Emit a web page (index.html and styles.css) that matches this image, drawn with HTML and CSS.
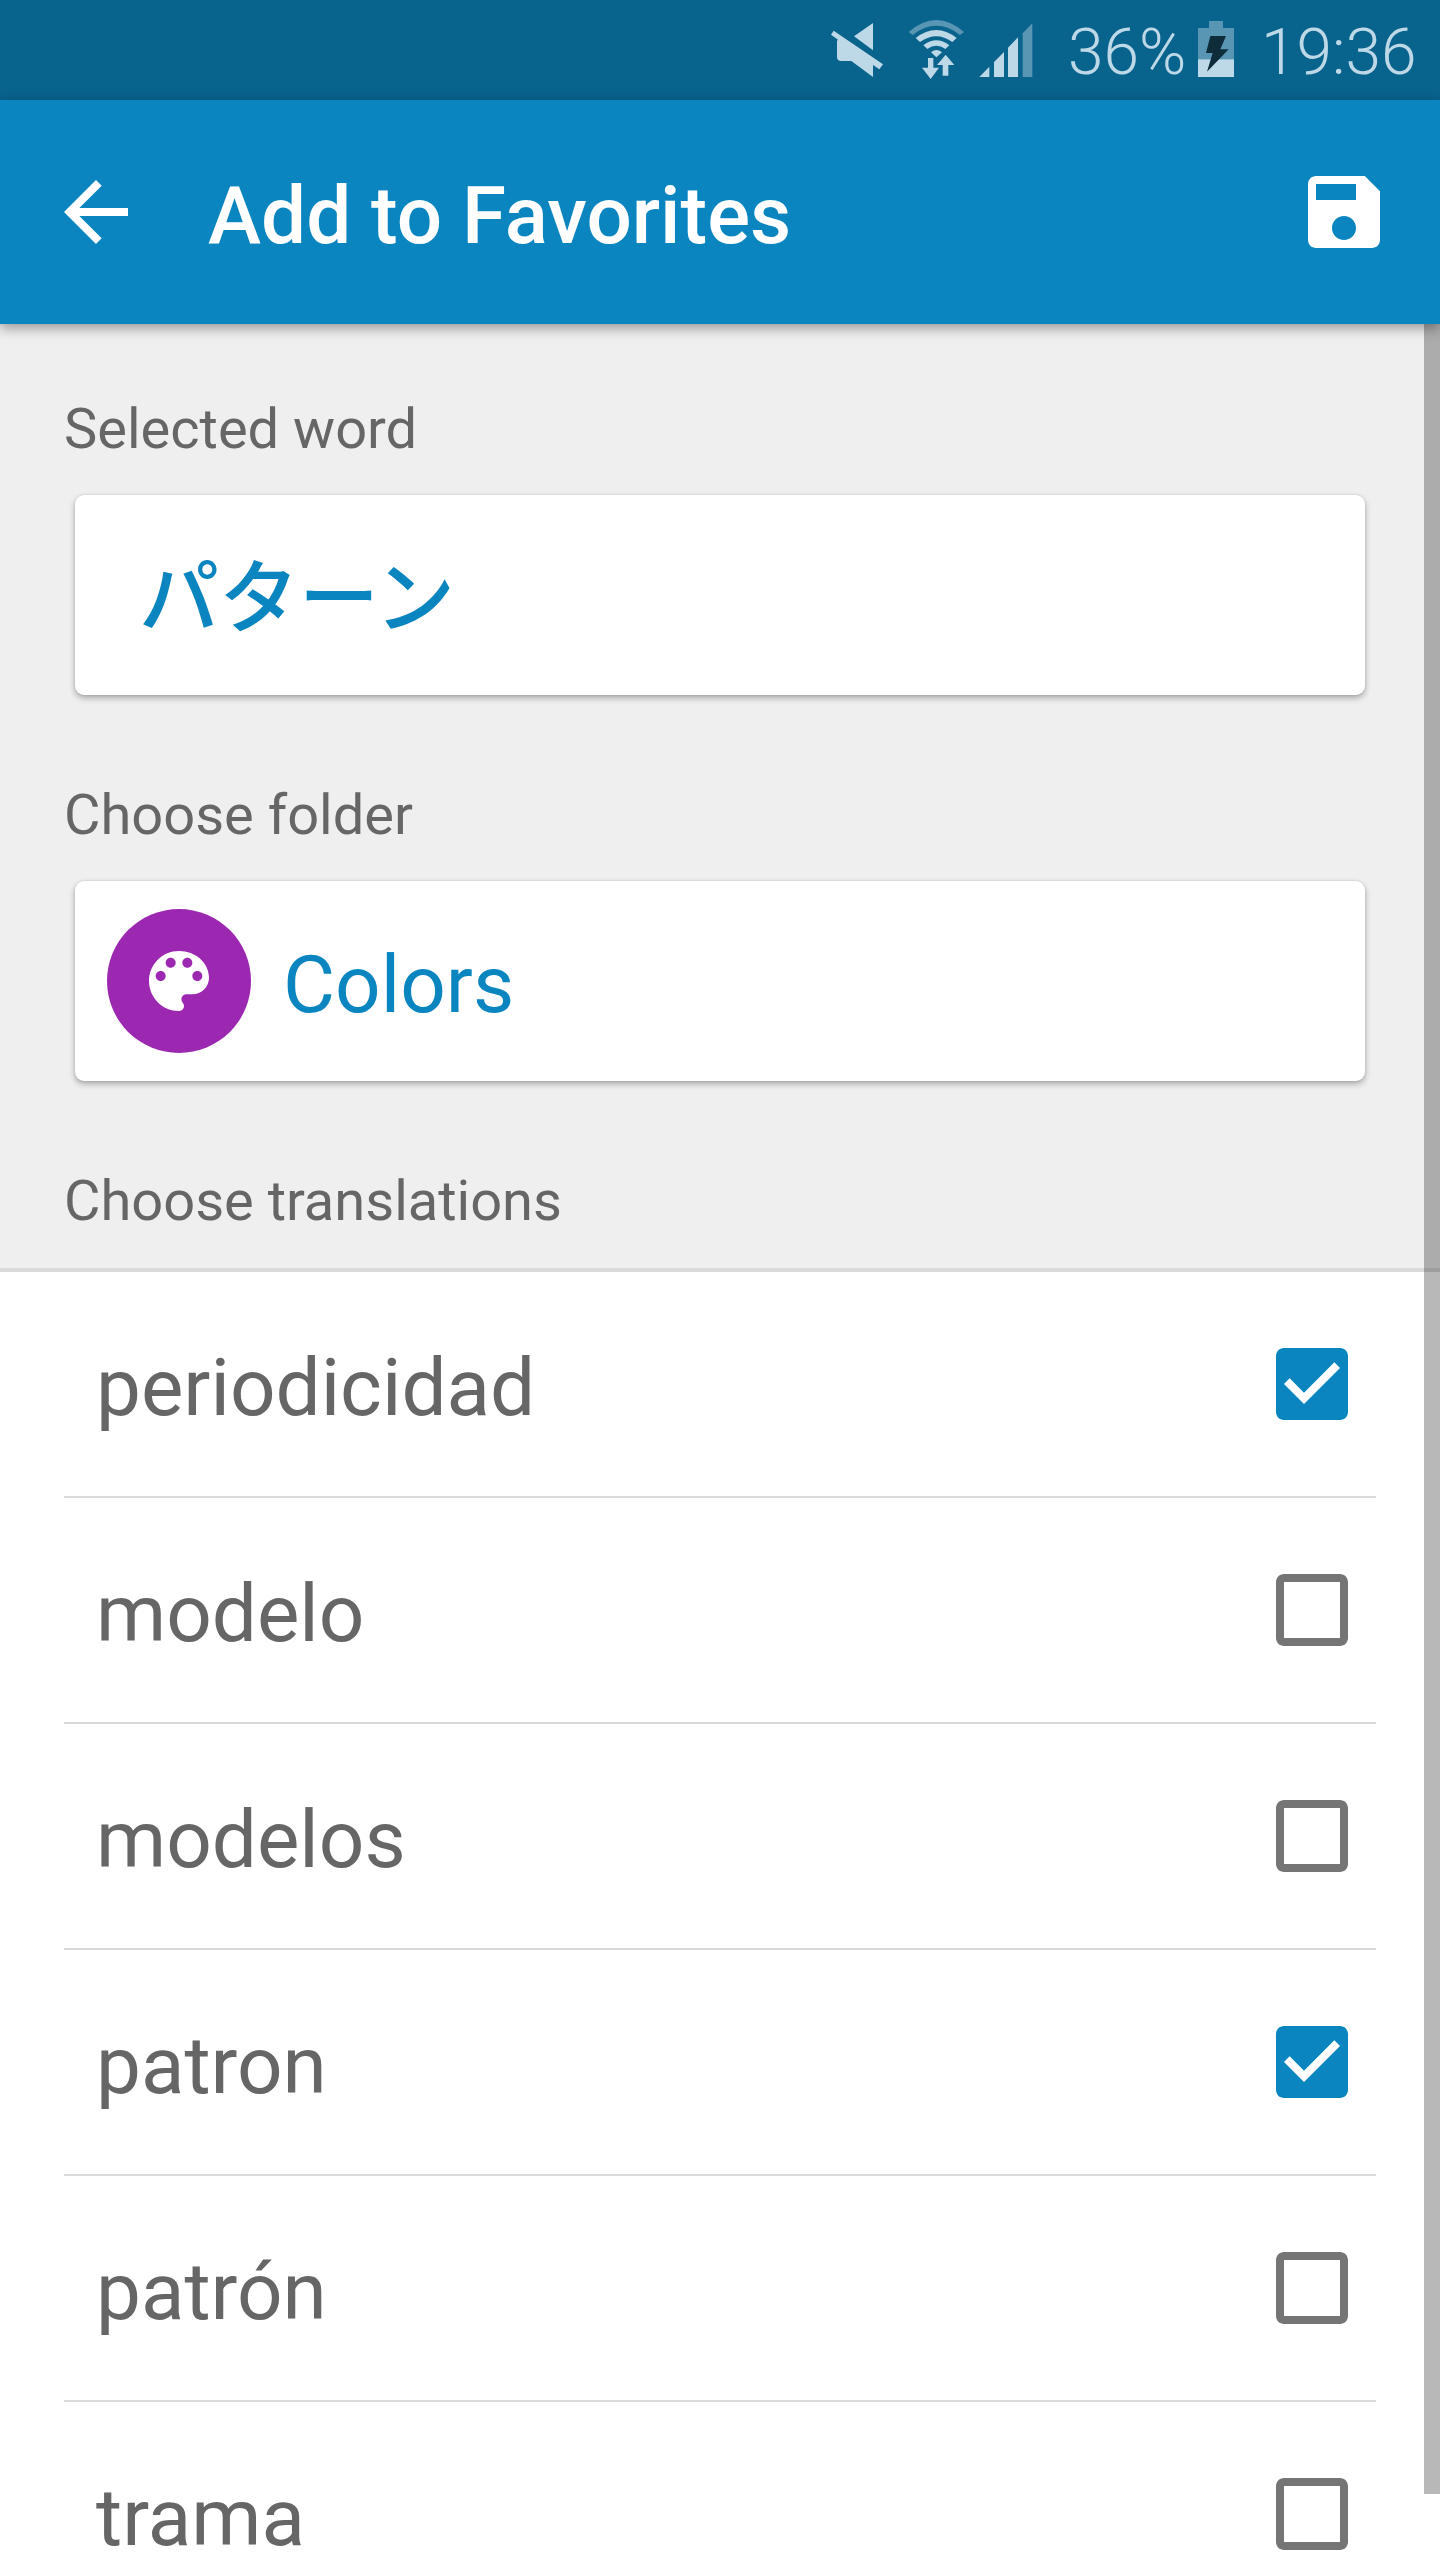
FILE: index.html
```html
<!DOCTYPE html>
<html lang="en">
<head>
  <meta charset="UTF-8" />
  <meta name="viewport" content="width=device-width, initial-scale=1.0"/>
  <title>Add to Favorites</title>
  <link rel="stylesheet" href="styles.css">
</head>
<body>
  <!-- shared checkbox icons -->
  <svg class="sprite" aria-hidden="true">
    <symbol id="box-on" viewBox="0 0 24 24">
      <path d="M19 3H5c-1.11 0-2 .9-2 2v14c0 1.1.89 2 2 2h14c1.11 0 2-.9 2-2V5c0-1.1-.89-2-2-2zm-9 14l-5-5 1.41-1.41L10 14.17l7.59-7.59L19 8l-9 9z"/>
    </symbol>
    <symbol id="box-off" viewBox="0 0 24 24">
      <path d="M19 5v14H5V5h14m0-2H5c-1.1 0-2 .9-2 2v14c0 1.1.9 2 2 2h14c1.1 0 2-.9 2-2V5c0-1.1-.9-2-2-2z"/>
    </symbol>
  </svg>

  <div class="app">
    <!-- STATUS BAR -->
    <div class="status-bar">
      <svg class="mute" viewBox="60 60 162 180" aria-label="Muted">
        <path d="M189 69V151L132 109Z"/>
        <path d="M71 92L219 193L208 208L189 195V231L124 183H94Q81 183 81 170V122L84 119L63 104Z"/>
      </svg>
      <svg class="wifi" viewBox="294 60 171 180" aria-label="Wi-Fi">
        <path class="dim" d="M296 96Q379 24 462 96L450 105Q379 50 308 105Z"/>
        <path d="M317 114Q379 66 440 114L427 126Q379 92 330 126Z"/>
        <path d="M340 136Q379 106 418 136L406 147Q379 127 352 147Z"/>
        <path d="M363 157Q379 143 396 157L379 172Z"/>
        <path d="M354 174H370V203H387L362 237L336 203H354Z"/>
        <path stroke="#08638d" stroke-width="4" paint-order="stroke" d="M407 164L433 195H415V227H398V195H381Z"/>
      </svg>
      <svg class="signal" viewBox="507 60 162 180" aria-label="Signal">
        <path d="M508 231L538 200V231ZM552 231V186L582 156V231ZM594 231V143L624 112V231Z"/>
        <path class="dim" d="M638 231V100L667 70V231Z"/>
      </svg>
      <span class="percent">36%</span>
      <svg class="battery" viewBox="234 60 108 180" aria-label="Charging">
        <path class="dim" d="M267 63H309V84H342V178H234V84H267Z"/>
        <path d="M234 178H342V231H234Z"/>
        <path class="bolt" d="M271 108H318L301 148H326L261 215L278 159H258Z"/>
      </svg>
      <span class="clock">19:36</span>
    </div>

    <!-- APP BAR -->
    <header class="app-bar">
      <svg class="icon" viewBox="0 0 24 24" aria-label="Back">
        <path d="M20 11H7.83l5.59-5.59L12 4l-8 8 8 8 1.41-1.41L7.83 13H20v-2z"/>
      </svg>
      <h1>Add to Favorites</h1>
      <svg class="icon" viewBox="0 0 24 24" aria-label="Save">
        <path fill-rule="evenodd" d="M17.2 3H5C3.9 3 3 3.9 3 5v14c0 1.1.9 2 2 2h14c1.1 0 2-.9 2-2V6.8zM12 19c-1.66 0-3-1.34-3-3s1.34-3 3-3 3 1.34 3 3-1.34 3-3 3zM15 9H5V5h10v4z"/>
      </svg>
    </header>

    <main class="content">
      <section class="form">
        <h2>Selected word</h2>
        <div class="card word" lang="ja">パターン</div>

        <h2>Choose folder</h2>
        <div class="card folder">
          <span class="badge">
            <svg viewBox="0 0 24 24">
              <path d="M12 3c-4.97 0-9 4.03-9 9s4.03 9 9 9c.83 0 1.5-.67 1.5-1.5 0-.39-.15-.74-.39-1.01-.23-.26-.38-.61-.38-.99 0-.83.67-1.5 1.5-1.5H16c2.76 0 5-2.24 5-5 0-4.42-4.03-8-9-8zm-5.5 9c-.83 0-1.5-.67-1.5-1.5S5.67 9 6.5 9 8 9.67 8 10.5 7.33 12 6.5 12zm3-4C8.67 8 8 7.33 8 6.5S8.67 5 9.5 5s1.5.67 1.5 1.5S10.33 8 9.5 8zm5 0c-.83 0-1.5-.67-1.5-1.5S13.67 5 14.5 5s1.5.67 1.5 1.5S15.33 8 14.5 8zm3 4c-.83 0-1.5-.67-1.5-1.5S16.67 9 17.5 9s1.5.67 1.5 1.5-.67 1.5-1.5 1.5z"/>
            </svg>
          </span>
          <span class="folder-name">Colors</span>
        </div>

        <h2>Choose translations</h2>
      </section>

      <!-- TRANSLATIONS -->
      <ul class="translations">
        <li><span>periodicidad</span><svg class="check on"><use href="#box-on"/></svg></li>
        <li><span>modelo</span><svg class="check"><use href="#box-off"/></svg></li>
        <li><span>modelos</span><svg class="check"><use href="#box-off"/></svg></li>
        <li><span>patron</span><svg class="check on"><use href="#box-on"/></svg></li>
        <li><span>patrón</span><svg class="check"><use href="#box-off"/></svg></li>
        <li><span>trama</span><svg class="check"><use href="#box-off"/></svg></li>
      </ul>
      <div class="scrollbar"></div>
    </main>
  </div>
</body>
</html>
```
FILE: styles.css
```css
/* RESET & BASE */
* { margin:0; padding:0; box-sizing:border-box; }
body, html { height:100%; overflow:hidden; }
body { font-family:Roboto,"Noto Sans CJK JP",sans-serif; background:#fff; color:#666; }
svg { display:block; flex:none; }
.sprite { display:none; }

.app { height:100%; display:flex; flex-direction:column; }

/* STATUS BAR */
.status-bar {
  height:100px; flex:none;
  display:flex; align-items:center; justify-content:flex-end;
  padding-right:24px;
  background:#08638d; color:#bdd8e6; fill:#bdd8e6;
  font-size:64px; font-weight:350; line-height:1;
}
.status-bar svg { height:60px; }
.status-bar span { padding-top:6px; white-space:nowrap; }
.mute { width:54px; margin-right:24px; }
.wifi { width:57px; margin-right:14px; }
.signal { width:54px; }
.battery { width:36px; }
.percent { width:117px; margin:0 13px 0 35px; }
.clock { width:155px; margin-left:27px; }
.dim { fill:#5896b4; }
.bolt { fill:#0f2c3a; }

/* APP BAR */
.app-bar {
  height:224px; flex:none;
  display:flex; align-items:center;
  padding:0 48px;
  background:#0a85c0; color:#fff; fill:#fff;
  box-shadow:0 4px 12px rgba(0,0,0,0.38);
  position:relative; z-index:1;
}
.icon { width:96px; height:96px; }
.app-bar h1 {
  flex:1; margin-left:64px; padding-top:8px;
  font-size:80px; font-weight:500; line-height:96px;
}

/* CONTENT */
.content { flex:1; min-height:0; overflow:hidden; position:relative; }
.form {
  background:#efefef;
  padding:72px 75px 34px;
  border-bottom:4px solid #d9dadb;
}
.form h2 {
  margin-left:-11px;
  font-size:56px; font-weight:400; line-height:66px;
}
.card {
  height:200px; margin:33px 0 87px;
  display:flex; align-items:center;
  background:#fff; color:#0a85c0; border-radius:9px;
  font-size:80px; line-height:96px;
  box-shadow:0 3px 6px rgba(0,0,0,0.3), 0 0 2px rgba(0,0,0,0.15);
}
.word { padding:8px 64px 0; font-weight:500; }
.folder { padding:0 32px; gap:32px; }
.folder-name { padding-top:8px; }
.badge {
  width:144px; height:144px; border-radius:50%;
  display:flex; align-items:center; justify-content:center;
  background:#9c27b0; fill:#fff;
}
.badge svg { width:80px; height:80px; }

/* LIST */
.translations { list-style:none; padding:0 64px; }
.translations li {
  height:226px; padding:0 16px 0 32px;
  display:flex; align-items:center; justify-content:space-between;
  border-bottom:2px solid #d9d9d9;
  font-size:80px; line-height:96px;
}
.translations span { padding-top:8px; }
.check { width:96px; height:96px; fill:#757575; }
.check.on { fill:#0a85c0; }

/* overlay scrollbar thumb */
.scrollbar {
  position:absolute; top:0; right:0;
  width:16px; height:2170px;
  background:rgba(0,0,0,0.28);
}
```
